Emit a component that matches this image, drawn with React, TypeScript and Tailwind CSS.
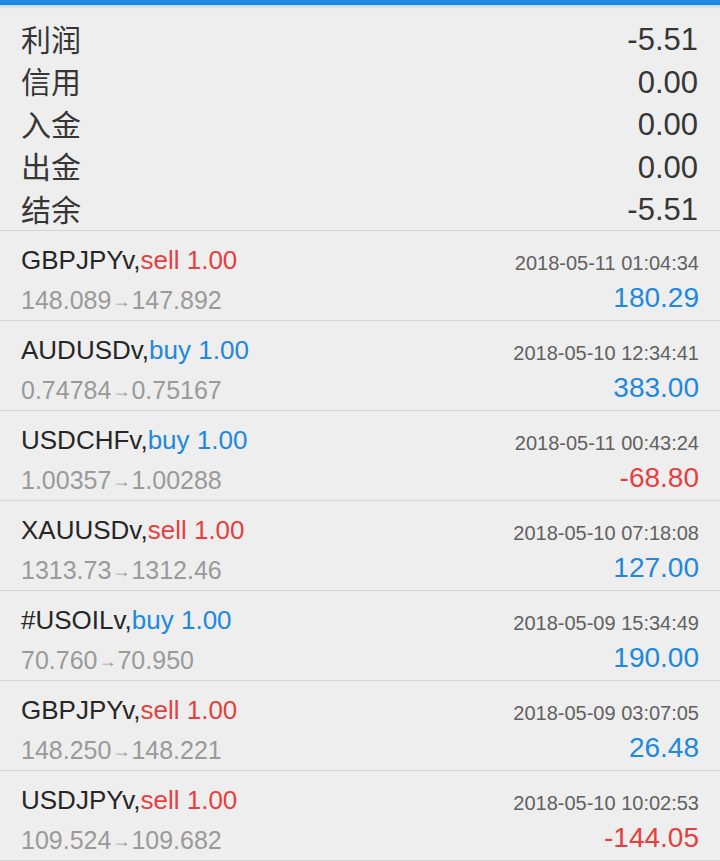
import React from 'react';

type Trade = {
  symbol: string;
  side: 'buy' | 'sell';
  volume: string;
  open: string;
  close: string;
  time: string;
  profit: string;
};

const summary = [
  { label: '利润', value: '-5.51' },
  { label: '信用', value: '0.00' },
  { label: '入金', value: '0.00' },
  { label: '出金', value: '0.00' },
  { label: '结余', value: '-5.51' },
];

const trades: Trade[] = [
  { symbol: 'GBPJPYv', side: 'sell', volume: '1.00', open: '148.089', close: '147.892', time: '2018-05-11 01:04:34', profit: '180.29' },
  { symbol: 'AUDUSDv', side: 'buy', volume: '1.00', open: '0.74784', close: '0.75167', time: '2018-05-10 12:34:41', profit: '383.00' },
  { symbol: 'USDCHFv', side: 'buy', volume: '1.00', open: '1.00357', close: '1.00288', time: '2018-05-11 00:43:24', profit: '-68.80' },
  { symbol: 'XAUUSDv', side: 'sell', volume: '1.00', open: '1313.73', close: '1312.46', time: '2018-05-10 07:18:08', profit: '127.00' },
  { symbol: '#USOILv', side: 'buy', volume: '1.00', open: '70.760', close: '70.950', time: '2018-05-09 15:34:49', profit: '190.00' },
  { symbol: 'GBPJPYv', side: 'sell', volume: '1.00', open: '148.250', close: '148.221', time: '2018-05-09 03:07:05', profit: '26.48' },
  { symbol: 'USDJPYv', side: 'sell', volume: '1.00', open: '109.524', close: '109.682', time: '2018-05-10 10:02:53', profit: '-144.05' },
];

function TradeRow({ t }: { t: Trade }) {
  const sideColor = t.side === 'sell' ? 'text-[#e5403f]' : 'text-[#2088dd]';
  const profitColor = t.profit.startsWith('-') ? 'text-[#e5403f]' : 'text-[#2088dd]';
  return (
    <div className="h-[90px] border-t border-[#d4d4d4] px-[21px] pt-[12px] flex justify-between">
      <div className="flex flex-col">
        <div className="text-[26px] leading-[34px] text-[#262626]">
          {t.symbol},<span className={sideColor}>{t.side} {t.volume}</span>
        </div>
        <div className="text-[25px] leading-[34px] mt-[6px] text-[#9a9a9a] flex items-center">
          <span>{t.open}</span>
          <span className="text-[18px] mx-[1px] pt-[1px]">→</span>
          <span>{t.close}</span>
        </div>
      </div>
      <div className="flex flex-col items-end">
        <div className="text-[20px] leading-[26px] mt-[7px] text-[#616161]">{t.time}</div>
        <div className={`text-[28px] leading-[36px] mt-[4px] ${profitColor}`}>{t.profit}</div>
      </div>
    </div>
  );
}

export default function App() {
  return (
    <div className="w-[720px] h-[861px] overflow-hidden bg-[#eeeeee] font-['Liberation_Sans','Noto_Sans_CJK_SC',sans-serif]">
      <div className="h-[5px] bg-[#1e88e5]" />
      <div className="h-[4px] bg-gradient-to-b from-[#c8d6e4] to-[#eeeeee]" />
      <div className="pt-[8px] pl-[21px] pr-[22px]">
        {summary.map((s) => (
          <div key={s.label} className="h-[42.5px] flex items-center justify-between text-[31px] text-[#363636]">
            <span className="font-['Noto_Sans_CJK_SC',sans-serif] text-[30px]">{s.label}</span>
            <span className="pt-[4px]">{s.value}</span>
          </div>
        ))}
      </div>
      {trades.map((t, i) => (
        <TradeRow key={i} t={t} />
      ))}
      <div className="border-t border-[#d4d4d4]" />
    </div>
  );
}
